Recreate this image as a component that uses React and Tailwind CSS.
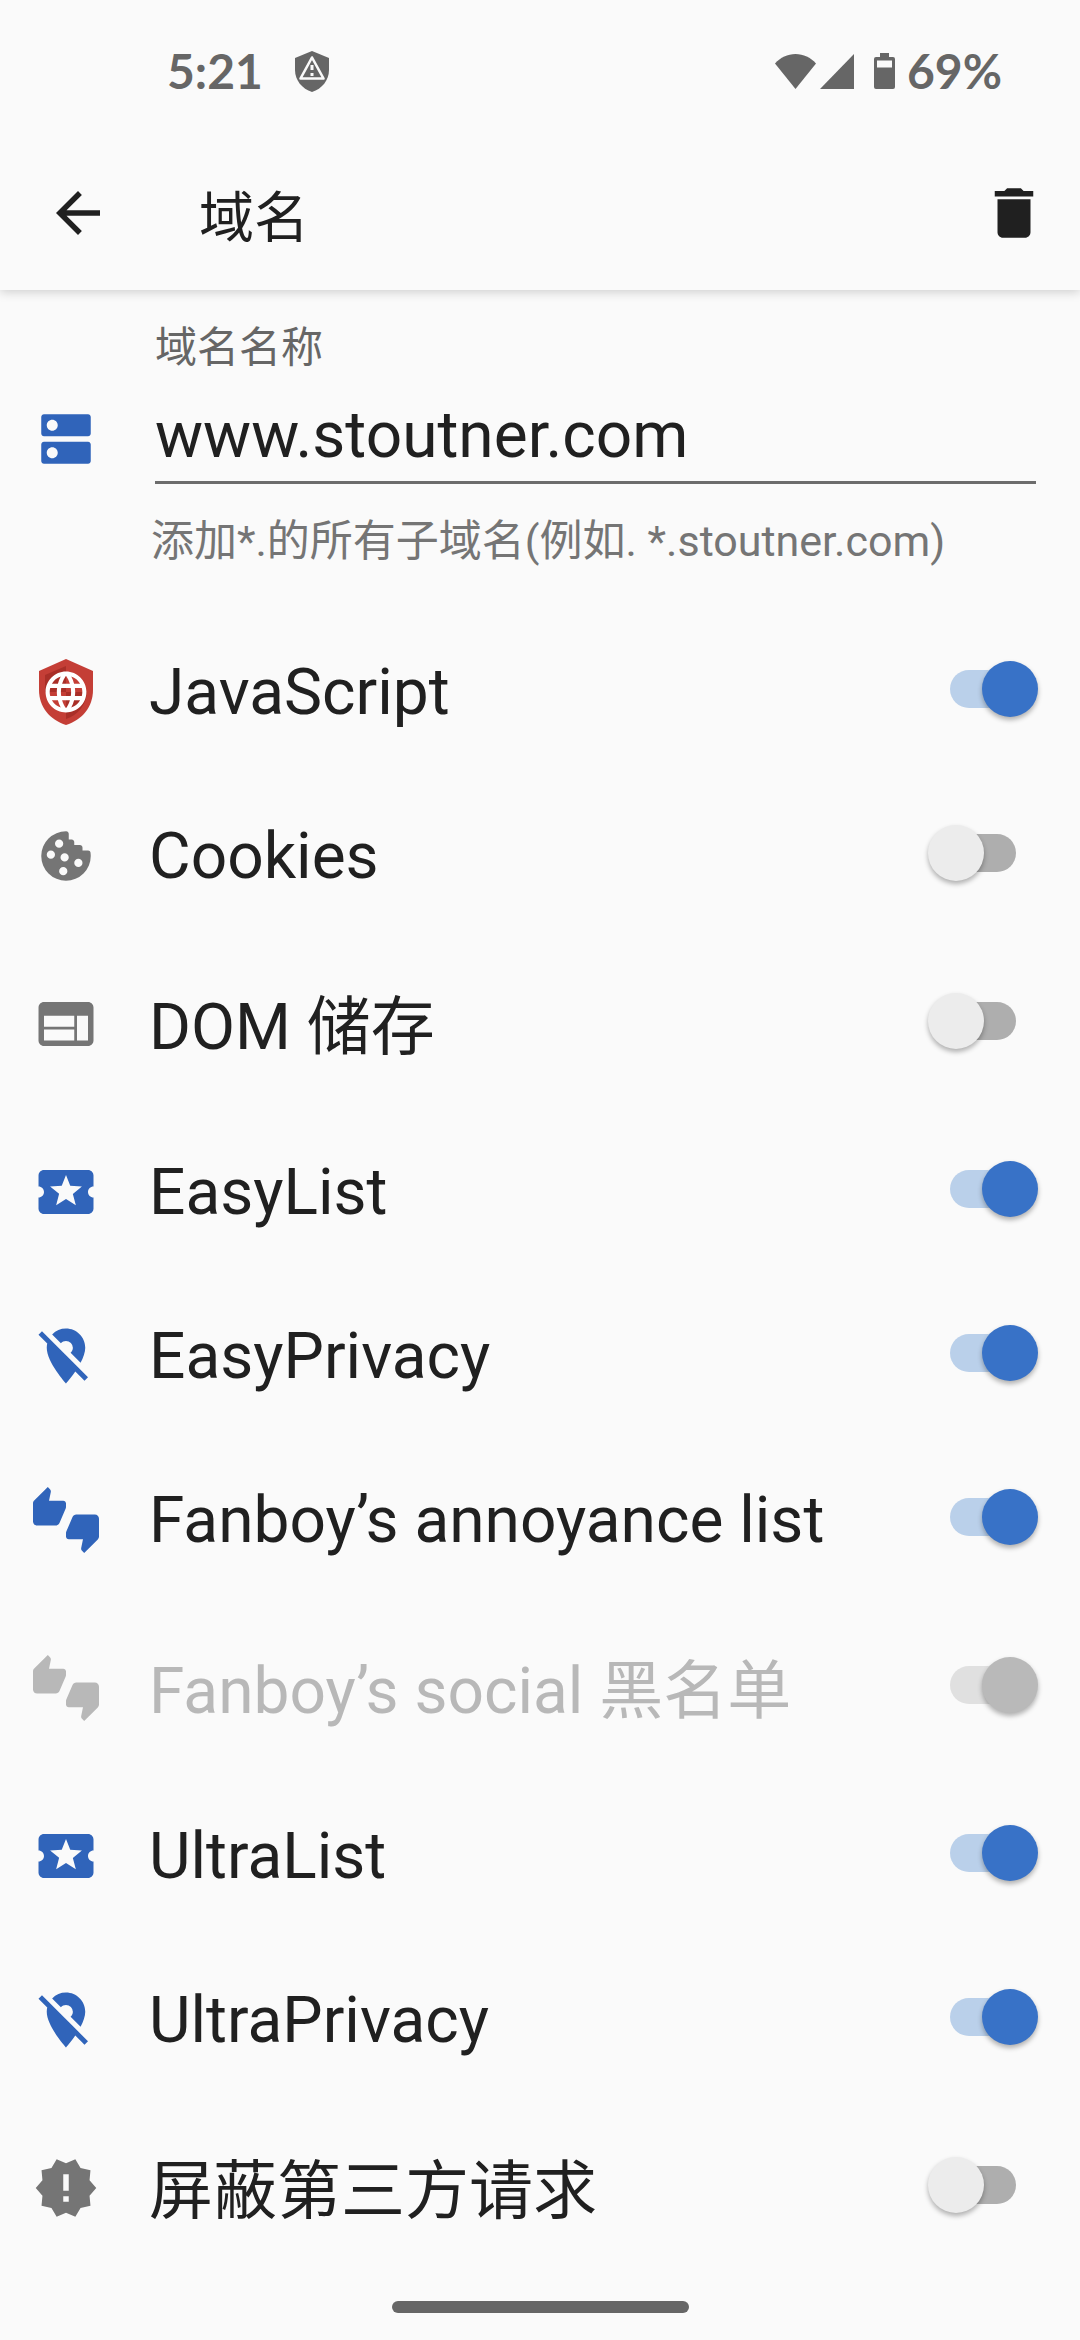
import { useState } from "react";
import {
  MdArrowBack,
  MdDelete,
  MdDns,
  MdLanguage,
  MdLocalPlay,
  MdLocationOff,
  MdNewReleases,
  MdThumbsUpDown,
  MdWeb,
} from "react-icons/md";

function ShieldAlertIcon() {
  return (
    <svg viewBox="0 0 34 41" className="h-[41px] w-[34px]" aria-hidden="true">
      <path d="M17 0 34 7v12c0 10-7 19-17 22C7 38 0 29 0 19V7z" fill="#666666" />
      <path d="M17 6.500 28.500 27.500H5.500z" fill="none" stroke="#fafafa" strokeWidth="2.600" strokeLinejoin="round" />
      <path d="M15.500 14h3v5h-3zM15.500 22h3v3h-3z" fill="#fafafa" />
    </svg>
  );
}

function WifiIcon() {
  return (
    <svg viewBox="0 0 41 35" className="h-[35px] w-[41px]" aria-hidden="true">
      <path d="M20.500 35 0 9.500C5.500 3.500 12.500 0 20.500 0S35.500 3.500 41 9.500z" fill="#666666" />
    </svg>
  );
}

function SignalIcon() {
  return (
    <svg viewBox="0 0 34 35" className="h-[35px] w-[34px]" aria-hidden="true">
      <path d="M0 35 34 0v35z" fill="#666666" />
    </svg>
  );
}

function BatteryIcon() {
  return (
    <svg viewBox="0 0 21 36" className="h-9 w-[21px]" aria-hidden="true">
      <path
        fillRule="evenodd"
        d="M6 0h9v4h4a2 2 0 0 1 2 2v28a2 2 0 0 1-2 2H2a2 2 0 0 1-2-2V6a2 2 0 0 1 2-2h4zM3 7.500v7h15v-7z"
        fill="#666666"
      />
    </svg>
  );
}

function PrivacyShieldIcon() {
  return (
    <svg viewBox="0 0 54 66" className="h-[66px] w-[54px]" aria-hidden="true">
      <path d="M27 0 54 12v19c0 17-11 30-27 35C11 61 0 48 0 31V12z" fill="#c43e36" />
      <path d="M27 7v26H6V16z" fill="#a92f28" />
      <path d="M27 33h21c-1 13-9 23-21 27z" fill="#a92f28" />
      <MdLanguage x="2.500" y="8.500" size="49" color="#ffffff" />
    </svg>
  );
}

function CookieIcon() {
  return (
    <svg viewBox="0 0 24 24" className="size-[66px]" fill="currentColor" aria-hidden="true">
      <path d="M12,3A9,9 0 0,0 3,12A9,9 0 0,0 12,21A9,9 0 0,0 21,12C21,11.5 20.96,11 20.87,10.5C20.6,10 20,10 20,10H18V9C18,8 17,8 17,8H15V7C15,6 14,6 14,6H13V4C13,3 12,3 12,3M9.5,6A1.5,1.5 0 0,1 11,7.5A1.5,1.5 0 0,1 9.5,9A1.5,1.5 0 0,1 8,7.5A1.5,1.5 0 0,1 9.5,6M6.5,10A1.5,1.5 0 0,1 8,11.5A1.5,1.5 0 0,1 6.5,13A1.5,1.5 0 0,1 5,11.5A1.5,1.5 0 0,1 6.5,10M11.5,11A1.5,1.5 0 0,1 13,12.5A1.5,1.5 0 0,1 11.5,14A1.5,1.5 0 0,1 10,12.5A1.5,1.5 0 0,1 11.5,11M16.5,13A1.5,1.5 0 0,1 18,14.5A1.5,1.5 0 0,1 16.5,16A1.5,1.5 0 0,1 15,14.5A1.5,1.5 0 0,1 16.5,13M11,16A1.5,1.5 0 0,1 12.5,17.5A1.5,1.5 0 0,1 11,19A1.5,1.5 0 0,1 9.5,17.5A1.5,1.5 0 0,1 11,16Z" />
    </svg>
  );
}

const SETTINGS = [
  { id: "javascript", label: "JavaScript", icon: <PrivacyShieldIcon />, on: true },
  { id: "cookies", label: "Cookies", icon: <CookieIcon />, on: false },
  { id: "dom-storage", label: "DOM 储存", icon: <MdWeb size={66} />, on: false, cjk: true },
  { id: "easylist", label: "EasyList", icon: <MdLocalPlay size={66} />, on: true },
  { id: "easyprivacy", label: "EasyPrivacy", icon: <MdLocationOff size={66} />, on: true },
  { id: "annoyance", label: "Fanboy’s annoyance list", icon: <MdThumbsUpDown size={66} />, on: true },
  { id: "social", label: "Fanboy’s social 黑名单", icon: <MdThumbsUpDown size={66} />, on: true, cjk: true, disabled: true },
  { id: "ultralist", label: "UltraList", icon: <MdLocalPlay size={66} />, on: true },
  { id: "ultraprivacy", label: "UltraPrivacy", icon: <MdLocationOff size={66} />, on: true },
  { id: "third-party", label: "屏蔽第三方请求", icon: <MdNewReleases size={66} />, on: false, cjk: true },
];

function SettingRow({ id, label, icon, on, cjk, disabled }) {
  const [checked, setChecked] = useState(on);
  const iconColor = disabled ? "text-[#b8b8b8]" : checked ? "text-[#3064ba]" : "text-[#757575]";

  return (
    <li className="flex items-center py-11 pr-16 pl-[33px]">
      <span className={`flex w-[66px] shrink-0 justify-center ${iconColor}`}>{icon}</span>
      <label
        htmlFor={id}
        className={`ml-[50px] flex-1 text-[64px] ${cjk ? "pt-2 leading-[76px]" : "pt-0.5 leading-[74px]"} ${
          disabled ? "text-[#b8b8b8]" : "text-[#202020]"
        }`}
      >
        {label}
      </label>
      <input
        id={id}
        type="checkbox"
        role="switch"
        checked={checked}
        disabled={disabled}
        onChange={(event) => setChecked(event.target.checked)}
        className="relative mb-1.5 h-[38px] w-[66px] shrink-0 appearance-none rounded-full bg-[#aeaeae] before:absolute before:top-[-9px] before:left-[-22px] before:size-14 before:rounded-full before:bg-[#ececec] before:shadow-[0_3px_5px_rgba(0,0,0,0.3)] checked:bg-[#bad0ea] checked:before:left-8 checked:before:bg-[#3872c7] disabled:bg-[#e0e0e0] disabled:before:bg-[#b9b9b9]"
      />
    </li>
  );
}

export default function App() {
  const [domain, setDomain] = useState("www.stoutner.com");

  return (
    <div className="flex min-h-screen flex-col bg-[#fafafa] font-[Roboto,'Noto_Sans_CJK_SC',sans-serif] text-[#202020]">
      <div className="shadow-[0_2px_10px_rgba(0,0,0,0.18)]">
        <div className="flex h-34 items-center pt-1.5 pr-[78px] pl-[167px] font-[Lato,sans-serif] text-5xl font-bold text-[#666666]">
          <span className="mr-8">5:21</span>
          <ShieldAlertIcon />
          <div className="ml-auto flex items-center">
            <WifiIcon />
            <span className="ml-1">
              <SignalIcon />
            </span>
            <span className="mr-3 ml-5">
              <BatteryIcon />
            </span>
            <span>69%</span>
          </div>
        </div>

        <header className="flex h-[154px] items-center pr-[33px] pl-[45px]">
          <button type="button" aria-label="返回">
            <MdArrowBack size={66} />
          </button>
          <h1 className="ml-[88px] flex-1 pt-2.5 text-[55px] leading-[66px]">域名</h1>
          <button type="button" aria-label="删除">
            <MdDelete size={66} />
          </button>
        </header>
      </div>

      <main>
        <div className="flex pt-7 pr-11 pb-[39px] pl-[33px]">
          <MdDns size={66} className="mt-22 shrink-0 text-[#3064ba]" />
          <div className="ml-[52px] flex flex-1 flex-col">
            <label htmlFor="domain" className="pl-1 text-[42px] leading-[60px] text-[#666666]">
              域名名称
            </label>
            <input
              id="domain"
              type="text"
              value={domain}
              onChange={(event) => setDomain(event.target.value)}
              aria-describedby="domain-hint"
              className="ml-1 min-w-0 border-b-3 border-[#6c6c6c] bg-transparent pt-5 pb-[7px] text-[64px] leading-[76px] outline-none"
            />
            <p id="domain-hint" className="mt-[27px] text-[43px] leading-[60px] text-[#757575]">
              添加*.的所有子域名(例如. *.stoutner.com)
            </p>
          </div>
        </div>

        <ul>
          {SETTINGS.map((setting) => (
            <SettingRow key={setting.id} {...setting} />
          ))}
        </ul>
      </main>

      <div className="mx-auto mt-[27px] h-3 w-[297px] rounded-full bg-[#666666]" />
    </div>
  );
}
